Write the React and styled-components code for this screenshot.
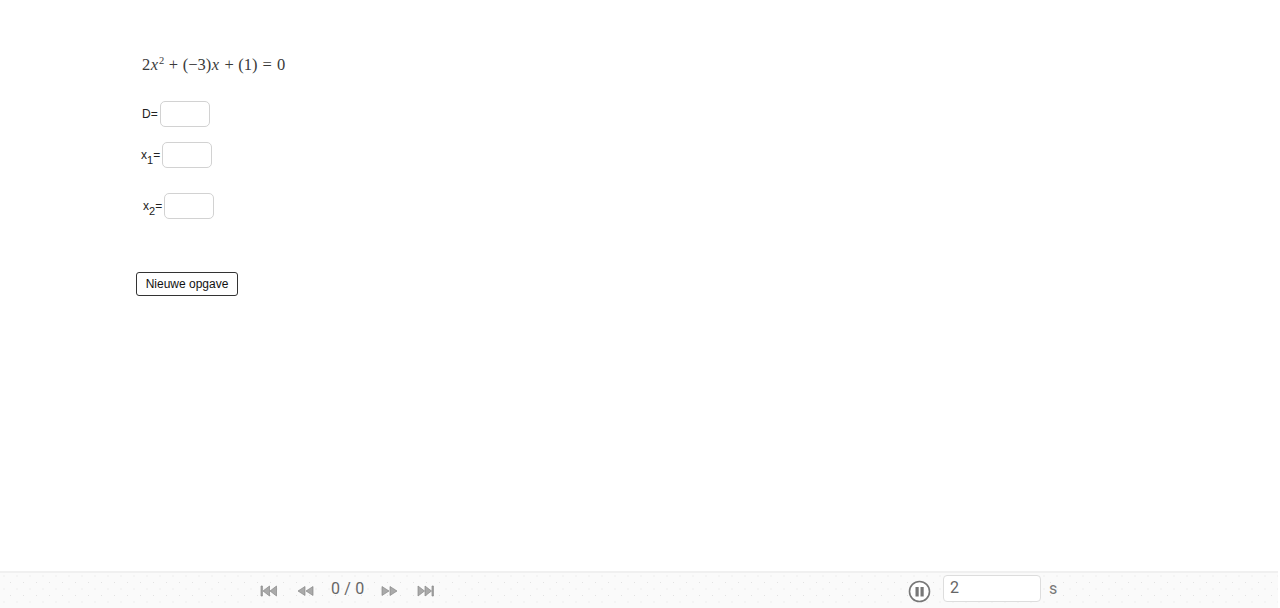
import React from "react";
import styled, { createGlobalStyle } from "styled-components";

const Global = createGlobalStyle`
  html, body { margin: 0; padding: 0; background: #fff; }
  body { font-family: "Liberation Sans", Arial, sans-serif; overflow: hidden; }
`;
const Page = styled.div`
  width: 1280px; height: 608px; display: flex; flex-direction: column; background: #fff;
`;
const Sheet = styled.main`
  flex: 1; display: flex; flex-direction: column; align-items: flex-start; padding: 55px 0 0 136px;
`;
const Equation = styled.div`
  font-family: "Liberation Serif", "DejaVu Serif", serif; font-size: 16.5px; line-height: 20px; color: #3a3a3a;
  margin-left: 6px; white-space: nowrap;
  i { font-style: italic; margin: 0 1px 0 .5px; }
  sup { font-size: 10.5px; line-height: 0; vertical-align: 6px; }
`;
const Op = styled.span`
  margin: 0 ${p => p.$gap || 4.5}px;
`;
const Field = styled.div`
  display: flex; align-items: center; margin-left: ${p => p.$left}px; margin-top: ${p => p.$top}px;
`;
const Label = styled.span`
  font-size: 12px; color: #222; line-height: 14px; white-space: nowrap; margin-right: 2px;
  sub { font-size: 11px; line-height: 0; vertical-align: -5px; }
`;
const Answer = styled.div`
  width: 50px; height: 26px; box-sizing: border-box; background: #fff; border: 1.5px solid #d2d2d2; border-radius: 5px;
`;
const Action = styled.button`
  width: 102px; height: 24px; margin-top: 53px; padding: 0; box-sizing: border-box; background: #fff;
  border: 1px solid #333; border-radius: 3px; font: 12px "Liberation Sans", Arial, sans-serif; color: #111;
`;
const Toolbar = styled.footer`
  width: 1278px; height: 37px; flex: none; box-sizing: border-box; position: relative; display: flex; align-items: center;
  border-top: 2px solid #f0f0f0; background-color: #fafafa;
  background-image: radial-gradient(#e2e2e2 .7px, transparent .9px), radial-gradient(#e2e2e2 .7px, transparent .9px);
  background-size: 13px 13px; background-position: 4px 3px, 10.5px 9.5px;
`;
const Nav = styled.div`
  display: flex; align-items: center; margin-left: 260px; margin-top: -1px; color: #666;
`;
const NavIcon = styled.svg`
  width: 18px; height: 12px; display: block; margin-top: 2px; margin-right: ${p => p.$gap || 0}px; fill: #aaa; stroke: #888; stroke-width: .7;
`;
const Count = styled.span`
  font: 16px Roboto, "Liberation Sans", sans-serif; color: #666; width: 32px; text-align: center; margin: -3px 18px 0 17px; white-space: nowrap; letter-spacing: .2px;
`;
const Pause = styled.svg`
  width: 23px; height: 23px; margin-left: 473px; margin-top: 1px; flex: none;
`;
const Speed = styled.div`
  width: 98px; height: 27px; margin-left: 12px; margin-top: -4px; box-sizing: border-box; border: 1px solid #ddd; border-radius: 4px; background: #fff;
  font: 16px Roboto, "Liberation Sans", sans-serif; color: #666; padding: 2px 0 0 6px; line-height: 20px;
`;
const Unit = styled.span`
  font: 16px Roboto, "Liberation Sans", sans-serif; color: #777; margin-left: 8px; margin-top: -4px;
`;

const First = () => <NavIcon viewBox="0 0 18 12" $gap={18}><path d="M1 1h1.4v10H1zM9.5 1v10L3 6zM16.5 1v10L10 6z"/></NavIcon>;
const Prev = () => <NavIcon viewBox="0 0 18 12"><path d="M9 1.500v9L2 6zM17 1.500v9L10 6z"/></NavIcon>;
const Next = () => <NavIcon viewBox="0 0 18 12" $gap={18}><path d="M1 1.500v9L8 6zM9 1.500v9L16 6z"/></NavIcon>;
const Last = () => <NavIcon viewBox="0 0 18 12"><path d="M1 1v10l6.500-5zM8 1v10l6.500-5zM15 1h1.400v10H15z"/></NavIcon>;

export default function App() {
  return (
    <Page>
      <Global />
      <Sheet>
        <Equation>
          2<i>x</i><sup>2</sup><Op>+</Op>(−3)<i>x</i><Op>+</Op>(1)<Op $gap={5}>=</Op>0
        </Equation>
        <Field $left={6} $top={26}><Label>D=</Label><Answer /></Field>
        <Field $left={5} $top={15}><Label>x<sub>1</sub>=</Label><Answer /></Field>
        <Field $left={7} $top={25}><Label>x<sub>2</sub>=</Label><Answer /></Field>
        <Action>Nieuwe opgave</Action>
      </Sheet>
      <Toolbar>
        <Nav>
          <First /><Prev />
          <Count>0 / 0</Count>
          <Next /><Last />
        </Nav>
        <Pause viewBox="0 0 23 23">
          <circle cx="11.5" cy="11.500" r="10" fill="#fff" stroke="#777" strokeWidth="1.600"/>
          <rect x="7.500" y="7" width="3.200" height="9.500" fill="#777"/>
          <rect x="12.500" y="7" width="3.200" height="9.500" fill="#777"/>
        </Pause>
        <Speed>2</Speed>
        <Unit>s</Unit>
      </Toolbar>
    </Page>
  );
}
